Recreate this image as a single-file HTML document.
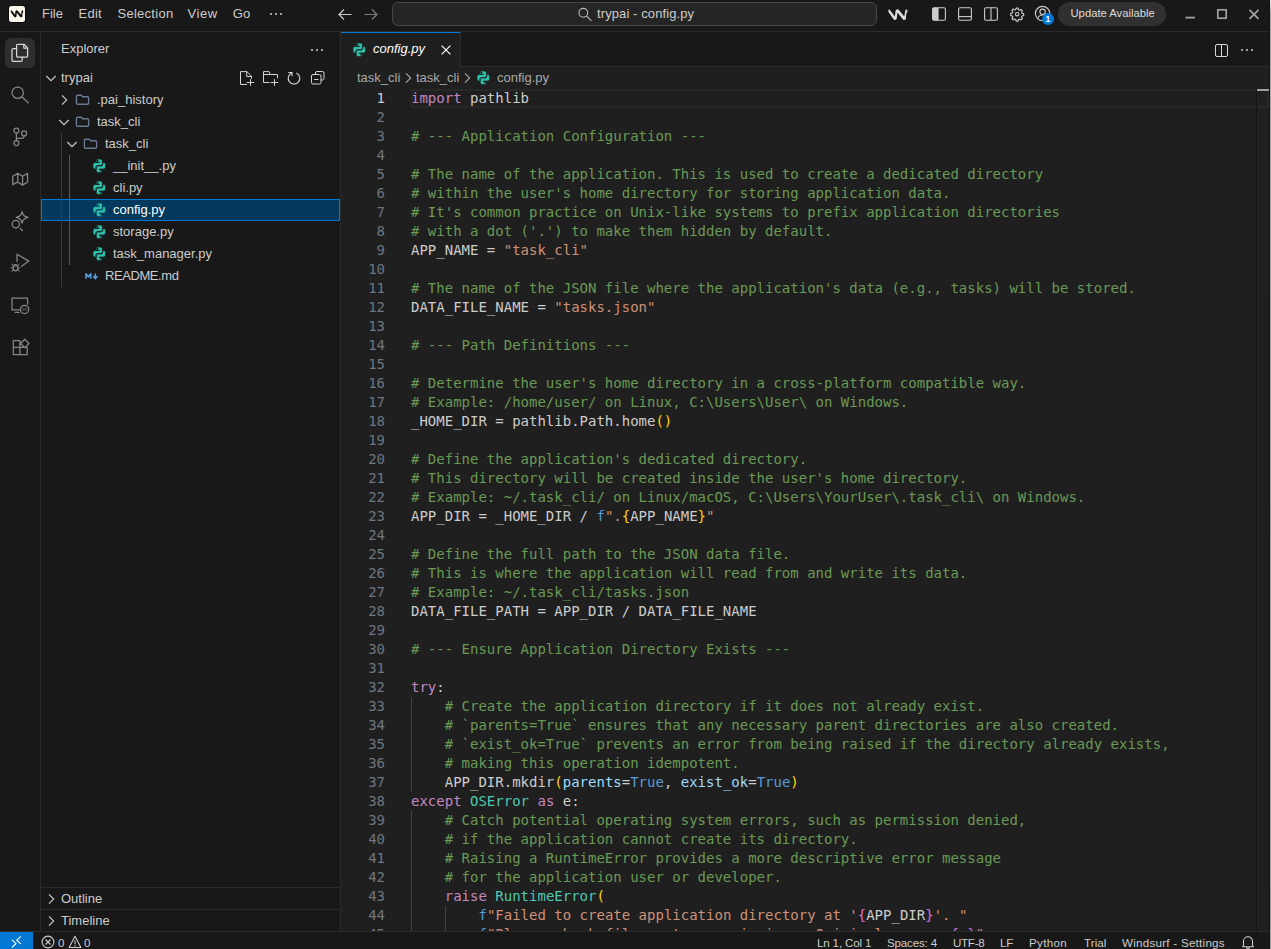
<!DOCTYPE html>
<html lang="en">
<head>
<meta charset="utf-8">
<title>trypai - config.py</title>
<style>
*{box-sizing:border-box;margin:0;padding:0}
html,body{width:1271px;height:949px;overflow:hidden;background:#181818}
body{position:relative;font-family:"Liberation Sans",sans-serif;font-size:13px;color:#cccccc;-webkit-font-smoothing:antialiased}
.abs{position:absolute}
svg{position:absolute;overflow:visible}
.t{position:absolute;white-space:pre;line-height:1}
/* title bar */
#title{left:0;top:0;width:1271px;height:32px;background:#181818;border-bottom:1px solid #2b2b2b}
#logo{left:9px;top:6px;width:16px;height:16px;border-radius:2.5px;background:#fbf4ea;box-shadow:0 0 0 1px rgba(0,0,0,0.450)}
.menu{top:7px;font-size:13px;color:#cccccc}
#search{left:392px;top:2px;width:485px;height:24px;border:1px solid #464646;border-radius:6px;background:#252525}
#update{left:1058px;top:2px;width:108px;height:24px;border-radius:12px;background:#303030}
/* activity bar */
#act{left:0;top:32px;width:41px;height:899px;border-right:1px solid #2b2b2b;background:#181818}
#actsel{left:5px;top:38px;width:30px;height:30px;border-radius:6px;background:#2d2e2e}
/* sidebar */
#side{left:41px;top:32px;width:300px;height:899px;border-right:1px solid #2b2b2b;background:#181818}
.row{position:absolute;left:41px;width:299px;height:22px}
.lbl{position:absolute;top:4px;font-size:13px;line-height:15px;white-space:pre;color:#cccccc}
#selrow{left:41px;top:199px;width:299px;height:22px;background:#04395e;border:1px solid #0078d4}
.guide{position:absolute;width:1px;background:#3a3a3a}
.pane{position:absolute;left:41px;width:299px;height:22px;border-top:1px solid #2b2b2b}
/* editor */
#tabs{left:341px;top:32px;width:930px;height:35px;background:#181818;border-bottom:1px solid #2b2b2b}
#tab{left:341px;top:32px;width:120px;height:35px;background:#1f1f1f;border-top:1px solid #0078d4;border-right:1px solid #2b2b2b}
#ed{left:341px;top:67px;width:930px;height:864px;background:#1f1f1f;overflow:hidden}
#code{position:absolute;left:0;top:22px;width:930px;font-family:"DejaVu Sans Mono","Liberation Mono",monospace;font-size:14px;line-height:19px;color:#cccccc}
.ln{position:relative;height:19px;white-space:pre}
.ln i{position:absolute;left:0;width:44px;text-align:right;font-style:normal;color:#6e7681}
.ln b{position:absolute;left:70px;font-weight:normal}
.c{color:#6a9955}.k{color:#c586c0}.s{color:#ce9178}.v{color:#9cdcfe}.n{color:#569cd6}.y{color:#ffd700}.p{color:#da70d6}.g{color:#4ec9b0}
.bc{font-size:13px;color:#a9a9a9}
/* status */
#status{left:0;top:931px;width:1271px;height:22px;background:#181818;border-top:1px solid #2b2b2b}
#remote{left:0;top:932px;width:33px;height:21px;background:#0078d4}
.st{position:absolute;top:936px;font-size:11.600px;line-height:13px;white-space:pre;color:#cccccc}
</style>
</head>
<body>
<!-- TITLE BAR -->
<div id="title" class="abs"></div>
<div id="logo" class="abs"><svg width="16" height="16" viewBox="0 0 16 16" style="left:0;top:0"><path transform="translate(-0.840 1.120) scale(0.637 0.630)" d="M4.400 5.700 Q5 5.300 5.700 5.800 L10.900 12.500 L11.500 7 Q12.200 5.200 13.400 5.200 Q14.500 5.300 15.300 6.400 L20.300 12.600 L21.300 6.400 Q21.900 5.200 23 5.500 Q23.600 6.600 23.200 8.200 Q22.400 9 22.200 10 L21.900 14.800 Q21.500 16 20.200 16 Q19.200 16 18.600 14.900 L13.500 8.600 L12.700 14.800 Q12.300 16 11 16 Q10 16 9.400 14.900 L4.800 8.400 Q4 7 4.400 5.700 Z" fill="#050505" stroke="#050505" stroke-width="0.500"/></svg></div>
<div class="t menu" style="left:42px">File</div>
<div class="t menu" style="left:78.500px;letter-spacing:0.25px">Edit</div>
<div class="t menu" style="left:117.500px;letter-spacing:0.27px">Selection</div>
<div class="t menu" style="left:187.500px;letter-spacing:0.55px">View</div>
<div class="t menu" style="left:232.800px;letter-spacing:0.1px">Go</div>
<svg width="16" height="16" viewBox="0 0 16 16" style="left:268px;top:6px"><g fill="#cccccc"><circle cx="3" cy="8" r="1"/><circle cx="8" cy="8" r="1"/><circle cx="13" cy="8" r="1"/></g></svg>
<svg width="16" height="16" viewBox="0 0 16 16" style="left:337px;top:6px"><path d="M14.5 8.5H2.5M7 3.5L2 8.5l5 5" fill="none" stroke="#cccccc" stroke-width="1.2"/></svg>
<svg width="16" height="16" viewBox="0 0 16 16" style="left:363px;top:6px"><path d="M1.5 8.5h12M9 3.5l5 5-5 5" fill="none" stroke="#7a7a7a" stroke-width="1.2"/></svg>
<div id="search" class="abs"></div>
<svg width="16" height="16" viewBox="0 0 16 16" style="left:577px;top:6px"><circle cx="6.3" cy="6.8" r="4.4" fill="none" stroke="#b8b8b8" stroke-width="1.1"/><path d="M9.5 10l5 4.8" stroke="#b8b8b8" stroke-width="1.1" fill="none"/></svg>
<div class="t" style="left:597px;top:7px;font-size:13px;letter-spacing:0.1px;color:#cccccc">trypai - config.py</div>
<svg width="28" height="21" viewBox="0 0 28 21" style="left:884px;top:4px"><path d="M4.400 5.700 Q5 5.300 5.700 5.800 L10.900 12.500 L11.500 7 Q12.200 5.200 13.400 5.200 Q14.500 5.300 15.300 6.400 L20.300 12.600 L21.300 6.400 Q21.900 5.200 23 5.500 Q23.600 6.600 23.200 8.200 Q22.400 9 22.200 10 L21.900 14.800 Q21.500 16 20.200 16 Q19.200 16 18.600 14.900 L13.500 8.600 L12.700 14.800 Q12.300 16 11 16 Q10 16 9.400 14.900 L4.800 8.400 Q4 7 4.400 5.700 Z" fill="#dedede"/></svg>
<svg width="16" height="16" viewBox="0 0 16 16" style="left:931px;top:6px"><rect x="1.6" y="1.8" width="12.8" height="12.4" rx="1.4" fill="none" stroke="#cccccc" stroke-width="1.1"/><rect x="1.6" y="1.8" width="6" height="12.4" rx="1" fill="#cccccc"/></svg>
<svg width="16" height="16" viewBox="0 0 16 16" style="left:957px;top:6px"><rect x="1.6" y="1.8" width="12.8" height="12.4" rx="1.4" fill="none" stroke="#cccccc" stroke-width="1.1"/><path d="M1.6 10.6h12.8" stroke="#cccccc" stroke-width="1.1"/></svg>
<svg width="16" height="16" viewBox="0 0 16 16" style="left:983px;top:6px"><rect x="1.6" y="1.8" width="12.8" height="12.4" rx="1.4" fill="none" stroke="#cccccc" stroke-width="1.1"/><path d="M8 1.8v12.4" stroke="#cccccc" stroke-width="1.1"/></svg>
<svg width="14.400" height="14.400" viewBox="0 0 16 16" style="left:1009.800px;top:6.800px"><g fill="none" stroke="#cccccc" stroke-width="1.250"><circle cx="8" cy="8" r="1.9"/><path d="M6.9 1.3h2.2l.4 1.9 1.2.5 1.6-1.1 1.6 1.6-1.1 1.6.5 1.2 1.9.4v2.2l-1.9.4-.5 1.2 1.1 1.6-1.6 1.6-1.6-1.1-1.2.5-.4 1.9H6.9l-.4-1.9-1.2-.5-1.6 1.1-1.6-1.6 1.1-1.6-.5-1.2-1.9-.4V6.900l1.900-.4.5-1.200-1.100-1.600 1.600-1.600 1.600 1.100 1.200-.5z" stroke-linejoin="round"/></g></svg>
<svg width="18" height="18" viewBox="0 0 18 18" style="left:1034px;top:5px"><g fill="none" stroke="#cccccc" stroke-width="1.1"><circle cx="8.6" cy="8.6" r="7.2"/><circle cx="8.6" cy="6.8" r="2.7"/><path d="M3.6 13.6c.9-2.400 2.800-3.600 5-3.600s4.100 1.200 5 3.600"/></g></svg>
<div class="abs" style="left:1042px;top:13px;width:12px;height:12px;border-radius:6px;background:#0078d4"></div>
<div class="t" style="left:1045.600px;top:15px;font-size:8.500px;font-weight:bold;color:#fff">1</div>
<div id="update" class="abs"></div>
<div class="t" style="left:1070.500px;top:8px;font-size:11.250px;color:#dcdcdc">Update Available</div>
<svg width="12" height="12" viewBox="0 0 12 12" style="left:1185px;top:8px"><path d="M.5 9.600h9.500" stroke="#a0a0a0" stroke-width="1.8"/></svg>
<svg width="12" height="12" viewBox="0 0 12 12" style="left:1216px;top:8px"><rect x="1.800" y="1.800" width="8.400" height="8.400" fill="none" stroke="#a0a0a0" stroke-width="1.700"/></svg>
<svg width="12" height="12" viewBox="0 0 12 12" style="left:1248px;top:8px"><path d="M1.500 1.800l9 9M10.500 1.800l-9 9" stroke="#a0a0a0" stroke-width="1.800"/></svg>

<!-- ACTIVITY BAR -->
<div id="act" class="abs"></div>
<div id="actsel" class="abs"></div>
<svg width="40" height="340" viewBox="0 0 40 340" style="left:0;top:32px"><g fill="none" stroke-linejoin="round" stroke-linecap="round" stroke-width="1.25">
<g stroke="#d7d7d7">
<path d="M16.600 16.500h-3.300a1.300 1.300 0 0 0-1.300 1.300v10.300a1.300 1.300 0 0 0 1.300 1.300h7.600a1.300 1.300 0 0 0 1.300-1.300v-2.900"/>
<path d="M17.900 12.300h6.100l3.600 3.600v8a1.300 1.300 0 0 1-1.300 1.300h-8.400a1.300 1.300 0 0 1-1.300-1.300v-10.300a1.300 1.300 0 0 1 1.300-1.300z"/>
<path d="M23.800 12.500v3.600h3.600"/>
</g>
<g stroke="#868686">
<circle cx="17.700" cy="60.700" r="5.700"/><path d="M22 65l6.200 5.800"/>
<circle cx="16.400" cy="98.600" r="2.500"/><circle cx="16.400" cy="111" r="2.500"/><circle cx="24.100" cy="101.400" r="2.500"/>
<path d="M16.400 101.100v7.400M24.100 103.900c0 1.800-1.200 2.400-2.600 2.400h-5.100"/>
<path d="M12.800 144.200l4.900-2.800 4.900 2.800 5-2.800v8.600l-5 3.100-4.900-3.100-4.900 2.600zM17.700 141.400v8.600M22.600 144.200v8.900"/>
<circle cx="15.800" cy="192.100" r="3.700"/><path d="M20.300 196.500l2 2"/>
<path d="M22.100 179.600c.5 3.300 1.900 5 5.900 5.800-4 .8-5.400 2.500-5.900 5.800-.5-3.300-1.900-5-5.900-5.800 4-.8 5.400-2.500 5.900-5.800z"/>
<path d="M17 229.500v-7.300l11.800 6.900-7.500 5.300"/>
<ellipse cx="15.500" cy="235.800" rx="2.400" ry="3.100"/><path d="M13.500 234h4M13.100 235.900h-1.900M17.900 235.900h1.900M13.400 237.700l-1.800 1.500M17.600 237.700l1.800 1.500M13.500 233.600l-1.800-1.500M17.500 233.600l1.800-1.500" stroke-width="1"/>
<path d="M19.300 277.800h-7.300v-11.600h15.600v6M15.200 280.400h4"/>
<circle cx="24.600" cy="277.400" r="4.100"/><path d="M22.900 276.200l1.200 1.200-1.200 1.200M26.300 276.200l-1.200 1.200 1.200 1.200" stroke-width=".8"/>
<path d="M13.300 308.700h6.600v13.800h-6.600zM13.300 315.400h13.900v7.100h-7.300M24.800 307.200l4.200 4.300-4.200 4.300-4.200-4.300z"/>
</g></g></svg>

<!-- SIDEBAR -->
<div id="side" class="abs"></div>
<div class="t" style="left:61px;top:42px;font-size:13px;color:#cccccc">Explorer</div>
<svg width="16" height="16" viewBox="0 0 16 16" style="left:309px;top:42px"><g fill="#cccccc"><circle cx="3" cy="8" r="1"/><circle cx="8" cy="8" r="1"/><circle cx="13" cy="8" r="1"/></g></svg>
<svg width="16" height="16" viewBox="0 0 16 16" style="left:43px;top:70px"><path d="M3.300 6l4.700 4.700 4.700-4.700" fill="none" stroke="#cccccc" stroke-width="1.100"/></svg>
<div class="lbl" style="left:61px;top:70px">trypai</div>
<svg width="16" height="16" viewBox="0 0 16 16" style="left:239px;top:70px"><path d="M8 14.500h-6.500v-12.900h6.400l4.600 4.600v2.600M7.700 1.800v4.700h4.700M11.500 9.200v6.600M7.700 12.500h7.500" fill="none" stroke="#d4d4d4" stroke-width="1"/></svg>
<svg width="16" height="16" viewBox="0 0 16 16" style="left:262px;top:70px"><path d="M7.500 12.500h-6v-10.900h5.500l1.200 2.900h7.300v3.800M1.500 4.500h6.700M12.500 9.200v6.600M8.700 12.500h7.500" fill="none" stroke="#d4d4d4" stroke-width="1"/></svg>
<svg width="16" height="16" viewBox="0 0 16 16" style="left:286px;top:70px"><path d="M5.600 3a5.800 5.800 0 1 0 4.800 0M2.300 2.500h3.700v3.800" fill="none" stroke="#d4d4d4" stroke-width="1.100"/></svg>
<svg width="16" height="16" viewBox="0 0 16 16" style="left:310px;top:70px"><path d="M5.500 4.500v-1.500a1.500 1.500 0 0 1 1.500-1.500h5.500a1.500 1.500 0 0 1 1.500 1.500v5.500a1.500 1.500 0 0 1-1.500 1.500h-1.500" fill="none" stroke="#d4d4d4" stroke-width="1"/><rect x="1.500" y="4.500" width="9.500" height="9.500" rx="1.500" fill="none" stroke="#d4d4d4" stroke-width="1"/><path d="M4 9.500h4.500" stroke="#d4d4d4" stroke-width="1"/></svg>
<div id="selrow" class="abs"></div>
<div class="guide" style="left:61px;top:133px;height:154px"></div>
<div class="guide" style="left:69px;top:155px;height:110px;background:#585858"></div>
<svg width="16" height="16" viewBox="0 0 16 16" style="left:55.600px;top:92px"><path d="M6 3.300l4.700 4.700-4.700 4.700" fill="none" stroke="#cccccc" stroke-width="1.100"/></svg><svg width="14" height="11.700" viewBox="0 0 16 12" preserveAspectRatio="none" style="left:76.0px;top:94.2px"><path d="M1.900 1.200h3.600c.5 0 .9.200 1.200.600l.7 1h5.600c.8 0 1.400.600 1.400 1.400v5c0 .8-.6 1.400-1.400 1.400h-11.100c-.8 0-1.400-.6-1.400-1.400v-6.600c0-.8.600-1.400 1.400-1.400z" fill="none" stroke="#6a7a92" stroke-width="1.550"/></svg>
<div class="lbl" style="left:97px;top:92px">.pai_history</div>
<svg width="16" height="16" viewBox="0 0 16 16" style="left:56px;top:114px"><path d="M3.300 6l4.700 4.700 4.700-4.700" fill="none" stroke="#cccccc" stroke-width="1.100"/></svg><svg width="14" height="11.700" viewBox="0 0 16 12" preserveAspectRatio="none" style="left:76.0px;top:116.2px"><path d="M1.900 1.200h3.600c.5 0 .9.200 1.200.600l.7 1h5.600c.8 0 1.400.600 1.400 1.400v5c0 .8-.6 1.400-1.400 1.400h-11.100c-.8 0-1.400-.6-1.400-1.400v-6.600c0-.8.600-1.400 1.400-1.400z" fill="none" stroke="#6a7a92" stroke-width="1.550"/></svg>
<div class="lbl" style="left:97px;top:114px">task_cli</div>
<svg width="16" height="16" viewBox="0 0 16 16" style="left:64px;top:136px"><path d="M3.300 6l4.700 4.700 4.700-4.700" fill="none" stroke="#cccccc" stroke-width="1.100"/></svg><svg width="14" height="11.700" viewBox="0 0 16 12" preserveAspectRatio="none" style="left:84.0px;top:138.2px"><path d="M1.900 1.200h3.600c.5 0 .9.200 1.200.600l.7 1h5.600c.8 0 1.400.600 1.400 1.400v5c0 .8-.6 1.400-1.400 1.400h-11.100c-.8 0-1.400-.6-1.400-1.400v-6.600c0-.8.600-1.400 1.400-1.400z" fill="none" stroke="#6a7a92" stroke-width="1.550"/></svg>
<div class="lbl" style="left:105px;top:136px">task_cli</div>
<svg width="12.600" height="13.500" viewBox="0 0 24 24" preserveAspectRatio="none" style="left:92.900px;top:159.2px"><path fill="#2ebfa9" stroke="#181818" stroke-width="1.300" d="M14.25.18l.9.2.73.26.59.3.45.32.34.34.25.34.16.33.1.3.04.26.02.2-.01.13V8.5l-.05.63-.13.55-.21.46-.26.38-.3.31-.33.25-.35.19-.35.14-.33.1-.3.07-.26.04-.21.02H8.77l-.69.05-.59.14-.5.22-.41.27-.33.32-.27.35-.2.36-.15.37-.1.35-.07.32-.04.27-.02.21v3.06H3.17l-.21-.03-.28-.07-.32-.12-.35-.18-.36-.26-.36-.36-.35-.46-.32-.59-.28-.73-.21-.88-.14-1.05-.05-1.23.06-1.22.16-1.04.24-.87.32-.71.36-.57.4-.44.42-.33.42-.24.4-.16.36-.1.32-.05.24-.01h.16l.06.01h8.16v-.83H6.18l-.01-2.75-.02-.37.05-.34.11-.31.17-.28.25-.26.31-.23.38-.2.44-.18.51-.15.58-.12.64-.1.71-.06.77-.04.84-.02 1.27.05zm-6.3 1.98l-.23.33-.08.41.08.41.23.34.33.22.41.09.41-.09.33-.22.23-.34.08-.41-.08-.41-.23-.33-.33-.22-.41-.09-.41.09zm13.09 3.95l.28.06.32.12.35.18.36.27.36.35.35.47.32.59.28.73.21.88.14 1.04.05 1.23-.06 1.23-.16 1.04-.24.86-.32.71-.36.57-.4.45-.42.33-.42.24-.4.16-.36.09-.32.05-.24.02-.16-.01h-8.220v.82h5.840l.01 2.760.02.36-.05.34-.11.31-.17.29-.25.25-.31.24-.38.2-.44.17-.51.15-.58.13-.64.09-.71.07-.77.04-.84.01-1.270-.04-1.070-.14-.9-.2-.73-.25-.59-.3-.45-.33-.34-.34-.25-.34-.16-.33-.1-.3-.04-.25-.02-.2.01-.13v-5.340l.05-.64.13-.54.21-.46.26-.38.3-.32.33-.24.35-.2.35-.14.33-.1.3-.06.26-.04.21-.02.13-.01h5.840l.69-.05.59-.14.5-.21.41-.28.33-.32.27-.35.2-.36.15-.36.1-.35.07-.32.04-.28.02-.21V6.070h2.090l.14.01zm-6.470 14.250l-.23.33-.08.41.08.41.23.33.33.23.41.08.41-.08.33-.23.23-.33.08-.41-.08-.41-.23-.33-.33-.23-.41-.08-.41.08z"/></svg>
<div class="lbl" style="left:113px;top:158px">__init__.py</div>
<svg width="12.600" height="13.500" viewBox="0 0 24 24" preserveAspectRatio="none" style="left:92.900px;top:181.2px"><path fill="#2ebfa9" stroke="#181818" stroke-width="1.300" d="M14.25.18l.9.2.73.26.59.3.45.32.34.34.25.34.16.33.1.3.04.26.02.2-.01.13V8.5l-.05.63-.13.55-.21.46-.26.38-.3.31-.33.25-.35.19-.35.14-.33.1-.3.07-.26.04-.21.02H8.77l-.69.05-.59.14-.5.22-.41.27-.33.32-.27.35-.2.36-.15.37-.1.35-.07.32-.04.27-.02.21v3.06H3.17l-.21-.03-.28-.07-.32-.12-.35-.18-.36-.26-.36-.36-.35-.46-.32-.59-.28-.73-.21-.88-.14-1.05-.05-1.23.06-1.22.16-1.04.24-.87.32-.71.36-.57.4-.44.42-.33.42-.24.4-.16.36-.1.32-.05.24-.01h.16l.06.01h8.16v-.83H6.18l-.01-2.75-.02-.37.05-.34.11-.31.17-.28.25-.26.31-.23.38-.2.44-.18.51-.15.58-.12.64-.1.71-.06.77-.04.84-.02 1.27.05zm-6.3 1.98l-.23.33-.08.41.08.41.23.34.33.22.41.09.41-.09.33-.22.23-.34.08-.41-.08-.41-.23-.33-.33-.22-.41-.09-.41.09zm13.09 3.95l.28.06.32.12.35.18.36.27.36.35.35.47.32.59.28.73.21.88.14 1.04.05 1.23-.06 1.23-.16 1.04-.24.86-.32.71-.36.57-.4.45-.42.33-.42.24-.4.16-.36.09-.32.05-.24.02-.16-.01h-8.220v.82h5.840l.01 2.760.02.36-.05.34-.11.31-.17.29-.25.25-.31.24-.38.2-.44.17-.51.15-.58.13-.64.09-.71.07-.77.04-.84.01-1.270-.04-1.070-.14-.9-.2-.73-.25-.59-.3-.45-.33-.34-.34-.25-.34-.16-.33-.1-.3-.04-.25-.02-.2.01-.13v-5.340l.05-.64.13-.54.21-.46.26-.38.3-.32.33-.24.35-.2.35-.14.33-.1.3-.06.26-.04.21-.02.13-.01h5.840l.69-.05.59-.14.5-.21.41-.28.33-.32.27-.35.2-.36.15-.36.1-.35.07-.32.04-.28.02-.21V6.070h2.090l.14.01zm-6.470 14.250l-.23.33-.08.41.08.41.23.33.33.23.41.08.41-.08.33-.23.23-.33.08-.41-.08-.41-.23-.33-.33-.23-.41-.08-.41.08z"/></svg>
<div class="lbl" style="left:113px;top:180px">cli.py</div>
<svg width="12.600" height="13.500" viewBox="0 0 24 24" preserveAspectRatio="none" style="left:92.900px;top:203.2px"><path fill="#2ebfa9" stroke="#04395e" stroke-width="1.300" d="M14.25.18l.9.2.73.26.59.3.45.32.34.34.25.34.16.33.1.3.04.26.02.2-.01.13V8.5l-.05.63-.13.55-.21.46-.26.38-.3.31-.33.25-.35.19-.35.14-.33.1-.3.07-.26.04-.21.02H8.77l-.69.05-.59.14-.5.22-.41.27-.33.32-.27.35-.2.36-.15.37-.1.35-.07.32-.04.27-.02.21v3.06H3.17l-.21-.03-.28-.07-.32-.12-.35-.18-.36-.26-.36-.36-.35-.46-.32-.59-.28-.73-.21-.88-.14-1.05-.05-1.23.06-1.22.16-1.04.24-.87.32-.71.36-.57.4-.44.42-.33.42-.24.4-.16.36-.1.32-.05.24-.01h.16l.06.01h8.16v-.83H6.18l-.01-2.75-.02-.37.05-.34.11-.31.17-.28.25-.26.31-.23.38-.2.44-.18.51-.15.58-.12.64-.1.71-.06.77-.04.84-.02 1.27.05zm-6.3 1.98l-.23.33-.08.41.08.41.23.34.33.22.41.09.41-.09.33-.22.23-.34.08-.41-.08-.41-.23-.33-.33-.22-.41-.09-.41.09zm13.09 3.95l.28.06.32.12.35.18.36.27.36.35.35.47.32.59.28.73.21.88.14 1.04.05 1.23-.06 1.23-.16 1.04-.24.86-.32.71-.36.57-.4.45-.42.33-.42.24-.4.16-.36.09-.32.05-.24.02-.16-.01h-8.220v.82h5.840l.01 2.760.02.36-.05.34-.11.31-.17.29-.25.25-.31.24-.38.2-.44.17-.51.15-.58.13-.64.09-.71.07-.77.04-.84.01-1.270-.04-1.070-.14-.9-.2-.73-.25-.59-.3-.45-.33-.34-.34-.25-.34-.16-.33-.1-.3-.04-.25-.02-.2.01-.13v-5.340l.05-.64.13-.54.21-.46.26-.38.3-.32.33-.24.35-.2.35-.14.33-.1.3-.06.26-.04.21-.02.13-.01h5.840l.69-.05.59-.14.5-.21.41-.28.33-.32.27-.35.2-.36.15-.36.1-.35.07-.32.04-.28.02-.21V6.070h2.090l.14.01zm-6.470 14.250l-.23.33-.08.41.08.41.23.33.33.23.41.08.41-.08.33-.23.23-.33.08-.41-.08-.41-.23-.33-.33-.23-.41-.08-.41.08z"/></svg>
<div class="lbl" style="left:113px;top:202px;color:#ffffff">config.py</div>
<svg width="12.600" height="13.500" viewBox="0 0 24 24" preserveAspectRatio="none" style="left:92.900px;top:225.2px"><path fill="#2ebfa9" stroke="#181818" stroke-width="1.300" d="M14.25.18l.9.2.73.26.59.3.45.32.34.34.25.34.16.33.1.3.04.26.02.2-.01.13V8.5l-.05.63-.13.55-.21.46-.26.38-.3.31-.33.25-.35.19-.35.14-.33.1-.3.07-.26.04-.21.02H8.77l-.69.05-.59.14-.5.22-.41.27-.33.32-.27.35-.2.36-.15.37-.1.35-.07.32-.04.27-.02.21v3.06H3.17l-.21-.03-.28-.07-.32-.12-.35-.18-.36-.26-.36-.36-.35-.46-.32-.59-.28-.73-.21-.88-.14-1.05-.05-1.23.06-1.22.16-1.04.24-.87.32-.71.36-.57.4-.44.42-.33.42-.24.4-.16.36-.1.32-.05.24-.01h.16l.06.01h8.16v-.83H6.18l-.01-2.75-.02-.37.05-.34.11-.31.17-.28.25-.26.31-.23.38-.2.44-.18.51-.15.58-.12.64-.1.71-.06.77-.04.84-.02 1.27.05zm-6.3 1.98l-.23.33-.08.41.08.41.23.34.33.22.41.09.41-.09.33-.22.23-.34.08-.41-.08-.41-.23-.33-.33-.22-.41-.09-.41.09zm13.09 3.95l.28.06.32.12.35.18.36.27.36.35.35.47.32.59.28.73.21.88.14 1.04.05 1.23-.06 1.23-.16 1.04-.24.86-.32.71-.36.57-.4.45-.42.33-.42.24-.4.16-.36.09-.32.05-.24.02-.16-.01h-8.220v.82h5.840l.01 2.760.02.36-.05.34-.11.31-.17.29-.25.25-.31.24-.38.2-.44.17-.51.15-.58.13-.64.09-.71.07-.77.04-.84.01-1.270-.04-1.070-.14-.9-.2-.73-.25-.59-.3-.45-.33-.34-.34-.25-.34-.16-.33-.1-.3-.04-.25-.02-.2.01-.13v-5.340l.05-.64.13-.54.21-.46.26-.38.3-.32.33-.24.35-.2.35-.14.33-.1.3-.06.26-.04.21-.02.13-.01h5.840l.69-.05.59-.14.5-.21.41-.28.33-.32.27-.35.2-.36.15-.36.1-.35.07-.32.04-.28.02-.21V6.070h2.090l.14.01zm-6.470 14.250l-.23.33-.08.41.08.41.23.33.33.23.41.08.41-.08.33-.23.23-.33.08-.41-.08-.41-.23-.33-.33-.23-.41-.08-.41.08z"/></svg>
<div class="lbl" style="left:113px;top:224px">storage.py</div>
<svg width="12.600" height="13.500" viewBox="0 0 24 24" preserveAspectRatio="none" style="left:92.900px;top:247.2px"><path fill="#2ebfa9" stroke="#181818" stroke-width="1.300" d="M14.25.18l.9.2.73.26.59.3.45.32.34.34.25.34.16.33.1.3.04.26.02.2-.01.13V8.5l-.05.63-.13.55-.21.46-.26.38-.3.31-.33.25-.35.19-.35.14-.33.1-.3.07-.26.04-.21.02H8.77l-.69.05-.59.14-.5.22-.41.27-.33.32-.27.35-.2.36-.15.37-.1.35-.07.32-.04.27-.02.21v3.06H3.17l-.21-.03-.28-.07-.32-.12-.35-.18-.36-.26-.36-.36-.35-.46-.32-.59-.28-.73-.21-.88-.14-1.05-.05-1.23.06-1.22.16-1.04.24-.87.32-.71.36-.57.4-.44.42-.33.42-.24.4-.16.36-.1.32-.05.24-.01h.16l.06.01h8.16v-.83H6.18l-.01-2.75-.02-.37.05-.34.11-.31.17-.28.25-.26.31-.23.38-.2.44-.18.51-.15.58-.12.64-.1.71-.06.77-.04.84-.02 1.27.05zm-6.3 1.98l-.23.33-.08.41.08.41.23.34.33.22.41.09.41-.09.33-.22.23-.34.08-.41-.08-.41-.23-.33-.33-.22-.41-.09-.41.09zm13.09 3.95l.28.06.32.12.35.18.36.27.36.35.35.47.32.59.28.73.21.88.14 1.04.05 1.23-.06 1.23-.16 1.04-.24.86-.32.71-.36.57-.4.45-.42.33-.42.24-.4.16-.36.09-.32.05-.24.02-.16-.01h-8.220v.82h5.840l.01 2.760.02.36-.05.34-.11.31-.17.29-.25.25-.31.24-.38.2-.44.17-.51.15-.58.13-.64.09-.71.07-.77.04-.84.01-1.270-.04-1.070-.14-.9-.2-.73-.25-.59-.3-.45-.33-.34-.34-.25-.34-.16-.33-.1-.3-.04-.25-.02-.2.01-.13v-5.340l.05-.64.13-.54.21-.46.26-.38.3-.32.33-.24.35-.2.35-.14.33-.1.3-.06.26-.04.21-.02.13-.01h5.840l.69-.05.59-.14.5-.21.41-.28.33-.32.27-.35.2-.36.15-.36.1-.35.07-.32.04-.28.02-.21V6.070h2.090l.14.01zm-6.470 14.250l-.23.33-.08.41.08.41.23.33.33.23.41.08.41-.08.33-.23.23-.33.08-.41-.08-.41-.23-.33-.33-.23-.41-.08-.41.08z"/></svg>
<div class="lbl" style="left:113px;top:246px">task_manager.py</div>
<svg width="14" height="8" viewBox="0 0 14 8" style="left:84.500px;top:272px"><path d="M1 6.800v-5l2.400 3 2.400-3v5" fill="none" stroke="#58a0e8" stroke-width="1.500" stroke-linejoin="round"/><path d="M10.300 1.400v4.600M8.200 4.200l2.100 2.400 2.100-2.400" fill="none" stroke="#58a0e8" stroke-width="1.500"/></svg>
<div class="lbl" style="left:105px;top:268px;letter-spacing:-0.42px">README.md</div>
<div class="pane" style="top:887px"></div>
<div class="pane" style="top:909px"></div>
<svg width="16" height="16" viewBox="0 0 16 16" style="left:43px;top:891px"><path d="M6 3.300l4.700 4.700-4.700 4.700" fill="none" stroke="#cccccc" stroke-width="1.100"/></svg>
<div class="lbl" style="left:61px;top:891px">Outline</div>
<svg width="16" height="16" viewBox="0 0 16 16" style="left:43px;top:913px"><path d="M6 3.300l4.700 4.700-4.700 4.700" fill="none" stroke="#cccccc" stroke-width="1.100"/></svg>
<div class="lbl" style="left:61px;top:913px">Timeline</div>

<!-- EDITOR -->
<div id="tabs" class="abs"></div>
<div id="tab" class="abs"></div>
<svg width="12.600" height="13.500" viewBox="0 0 24 24" preserveAspectRatio="none" style="left:352.6px;top:43.2px"><path fill="#2ebfa9" stroke="#1f1f1f" stroke-width="1.300" d="M14.25.18l.9.2.73.26.59.3.45.32.34.34.25.34.16.33.1.3.04.26.02.2-.01.13V8.5l-.05.63-.13.55-.21.46-.26.38-.3.31-.33.25-.35.19-.35.14-.33.1-.3.07-.26.04-.21.02H8.77l-.69.05-.59.14-.5.22-.41.27-.33.32-.27.35-.2.36-.15.37-.1.35-.07.32-.04.27-.02.21v3.06H3.17l-.21-.03-.28-.07-.32-.12-.35-.18-.36-.26-.36-.36-.35-.46-.32-.59-.28-.73-.21-.88-.14-1.05-.05-1.23.06-1.22.16-1.04.24-.87.32-.71.36-.57.4-.44.42-.33.42-.24.4-.16.36-.1.32-.05.24-.01h.16l.06.01h8.16v-.83H6.18l-.01-2.75-.02-.37.05-.34.11-.31.17-.28.25-.26.31-.23.38-.2.44-.18.51-.15.58-.12.64-.1.71-.06.77-.04.84-.02 1.27.05zm-6.3 1.98l-.23.33-.08.41.08.41.23.34.33.22.41.09.41-.09.33-.22.23-.34.08-.41-.08-.41-.23-.33-.33-.22-.41-.09-.41.09zm13.09 3.95l.28.06.32.12.35.18.36.27.36.35.35.47.32.59.28.73.21.88.14 1.04.05 1.23-.06 1.23-.16 1.04-.24.86-.32.71-.36.57-.4.45-.42.33-.42.24-.4.16-.36.09-.32.05-.24.02-.16-.01h-8.220v.82h5.840l.01 2.760.02.36-.05.34-.11.31-.17.29-.25.25-.31.24-.38.2-.44.17-.51.15-.58.13-.64.09-.71.07-.77.04-.84.01-1.270-.04-1.070-.14-.9-.2-.73-.25-.59-.3-.45-.33-.34-.34-.25-.34-.16-.33-.1-.3-.04-.25-.02-.2.01-.13v-5.340l.05-.64.13-.54.21-.46.26-.38.3-.32.33-.24.35-.2.35-.14.33-.1.3-.06.26-.04.21-.02.13-.01h5.840l.69-.05.59-.14.5-.21.41-.28.33-.32.27-.35.2-.36.15-.36.1-.35.07-.32.04-.28.02-.21V6.070h2.090l.14.01zm-6.470 14.250l-.23.33-.08.41.08.41.23.33.33.23.41.08.41-.08.33-.23.23-.33.08-.41-.08-.41-.23-.33-.33-.23-.41-.08-.41.08z"/></svg>
<div class="t" style="left:373px;top:42px;font-size:13px;font-style:italic;color:#ffffff">config.py</div>
<svg width="16" height="16" viewBox="0 0 16 16" style="left:438px;top:42px"><path d="M3.600 3.600l8.800 8.800M12.400 3.600l-8.800 8.800" stroke="#ffffff" stroke-width="1.200" fill="none"/></svg>
<svg width="16" height="16" viewBox="0 0 16 16" style="left:1214px;top:43px"><rect x="1.500" y="1.500" width="12" height="12" rx="1.500" fill="none" stroke="#d8d8d8" stroke-width="1"/><path d="M7.500 1.500v12" stroke="#d8d8d8" stroke-width="1"/></svg>
<svg width="16" height="16" viewBox="0 0 16 16" style="left:1239px;top:42px"><g fill="#cccccc"><circle cx="3" cy="8" r="1"/><circle cx="8" cy="8" r="1"/><circle cx="13" cy="8" r="1"/></g></svg>
<div id="ed" class="abs"><div id="code">
<div class="ln"><i style="color:#cccccc">1</i><b><span class="k">import</span> pathlib</b></div>
<div class="ln"><i>2</i><b></b></div>
<div class="ln"><i>3</i><b><span class="c"># --- Application Configuration ---</span></b></div>
<div class="ln"><i>4</i><b></b></div>
<div class="ln"><i>5</i><b><span class="c"># The name of the application. This is used to create a dedicated directory</span></b></div>
<div class="ln"><i>6</i><b><span class="c"># within the user's home directory for storing application data.</span></b></div>
<div class="ln"><i>7</i><b><span class="c"># It's common practice on Unix-like systems to prefix application directories</span></b></div>
<div class="ln"><i>8</i><b><span class="c"># with a dot ('.') to make them hidden by default.</span></b></div>
<div class="ln"><i>9</i><b>APP_NAME = <span class="s">"task_cli"</span></b></div>
<div class="ln"><i>10</i><b></b></div>
<div class="ln"><i>11</i><b><span class="c"># The name of the JSON file where the application's data (e.g., tasks) will be stored.</span></b></div>
<div class="ln"><i>12</i><b>DATA_FILE_NAME = <span class="s">"tasks.json"</span></b></div>
<div class="ln"><i>13</i><b></b></div>
<div class="ln"><i>14</i><b><span class="c"># --- Path Definitions ---</span></b></div>
<div class="ln"><i>15</i><b></b></div>
<div class="ln"><i>16</i><b><span class="c"># Determine the user's home directory in a cross-platform compatible way.</span></b></div>
<div class="ln"><i>17</i><b><span class="c"># Example: /home/user/ on Linux, C:\Users\User\ on Windows.</span></b></div>
<div class="ln"><i>18</i><b>_HOME_DIR = pathlib.Path.home<span class="y">()</span></b></div>
<div class="ln"><i>19</i><b></b></div>
<div class="ln"><i>20</i><b><span class="c"># Define the application's dedicated directory.</span></b></div>
<div class="ln"><i>21</i><b><span class="c"># This directory will be created inside the user's home directory.</span></b></div>
<div class="ln"><i>22</i><b><span class="c"># Example: ~/.task_cli/ on Linux/macOS, C:\Users\YourUser\.task_cli\ on Windows.</span></b></div>
<div class="ln"><i>23</i><b>APP_DIR = _HOME_DIR / <span class="n">f</span><span class="s">".</span><span class="y">{</span>APP_NAME<span class="y">}</span><span class="s">"</span></b></div>
<div class="ln"><i>24</i><b></b></div>
<div class="ln"><i>25</i><b><span class="c"># Define the full path to the JSON data file.</span></b></div>
<div class="ln"><i>26</i><b><span class="c"># This is where the application will read from and write its data.</span></b></div>
<div class="ln"><i>27</i><b><span class="c"># Example: ~/.task_cli/tasks.json</span></b></div>
<div class="ln"><i>28</i><b>DATA_FILE_PATH = APP_DIR / DATA_FILE_NAME</b></div>
<div class="ln"><i>29</i><b></b></div>
<div class="ln"><i>30</i><b><span class="c"># --- Ensure Application Directory Exists ---</span></b></div>
<div class="ln"><i>31</i><b></b></div>
<div class="ln"><i>32</i><b><span class="k">try</span>:</b></div>
<div class="ln"><i>33</i><b>    <span class="c"># Create the application directory if it does not already exist.</span></b></div>
<div class="ln"><i>34</i><b>    <span class="c"># `parents=True` ensures that any necessary parent directories are also created.</span></b></div>
<div class="ln"><i>35</i><b>    <span class="c"># `exist_ok=True` prevents an error from being raised if the directory already exists,</span></b></div>
<div class="ln"><i>36</i><b>    <span class="c"># making this operation idempotent.</span></b></div>
<div class="ln"><i>37</i><b>    APP_DIR.mkdir<span class="y">(</span><span class="v">parents</span>=<span class="n">True</span>, <span class="v">exist_ok</span>=<span class="n">True</span><span class="y">)</span></b></div>
<div class="ln"><i>38</i><b><span class="k">except</span> <span class="g">OSError</span> <span class="k">as</span> e:</b></div>
<div class="ln"><i>39</i><b>    <span class="c"># Catch potential operating system errors, such as permission denied,</span></b></div>
<div class="ln"><i>40</i><b>    <span class="c"># if the application cannot create its directory.</span></b></div>
<div class="ln"><i>41</i><b>    <span class="c"># Raising a RuntimeError provides a more descriptive error message</span></b></div>
<div class="ln"><i>42</i><b>    <span class="c"># for the application user or developer.</span></b></div>
<div class="ln"><i>43</i><b>    <span class="k">raise</span> <span class="g">RuntimeError</span><span class="y">(</span></b></div>
<div class="ln"><i>44</i><b>        <span class="n">f</span><span class="s">"Failed to create application directory at '</span><span class="p">{</span>APP_DIR<span class="p">}</span><span class="s">'. "</span></b></div>
<div class="ln"><i>45</i><b>        <span class="n">f</span><span class="s">"Please check file system permissions. Original error: </span><span class="p">{</span>e<span class="p">}</span><span class="s">"</span></b></div>
</div></div>
<div class="t bc" style="left:357px;top:71px">task_cli</div>
<svg width="16" height="16" viewBox="0 0 16 16" style="left:400px;top:70px"><path d="M6 3.300l4.700 4.700-4.700 4.700" fill="none" stroke="#a9a9a9" stroke-width="1.100"/></svg>
<div class="t bc" style="left:416px;top:71px">task_cli</div>
<svg width="16" height="16" viewBox="0 0 16 16" style="left:459px;top:70px"><path d="M6 3.300l4.700 4.700-4.700 4.700" fill="none" stroke="#a9a9a9" stroke-width="1.100"/></svg>
<svg width="12.600" height="13.500" viewBox="0 0 24 24" preserveAspectRatio="none" style="left:476.600px;top:70.900px"><path fill="#2ebfa9" stroke="#1f1f1f" stroke-width="1.300" d="M14.25.18l.9.2.73.26.59.3.45.32.34.34.25.34.16.33.1.3.04.26.02.2-.01.13V8.5l-.05.63-.13.55-.21.46-.26.38-.3.31-.33.25-.35.19-.35.14-.33.1-.3.07-.26.04-.21.02H8.77l-.69.05-.59.14-.5.22-.41.27-.33.32-.27.35-.2.36-.15.37-.1.35-.07.32-.04.27-.02.21v3.06H3.17l-.21-.03-.28-.07-.32-.12-.35-.18-.36-.26-.36-.36-.35-.46-.32-.59-.28-.73-.21-.88-.14-1.05-.05-1.23.06-1.22.16-1.04.24-.87.32-.71.36-.57.4-.44.42-.33.42-.24.4-.16.36-.1.32-.05.24-.01h.16l.06.01h8.16v-.83H6.18l-.01-2.75-.02-.37.05-.34.11-.31.17-.28.25-.26.31-.23.38-.2.44-.18.51-.15.58-.12.64-.1.71-.06.77-.04.84-.02 1.27.05zm-6.3 1.98l-.23.33-.08.41.08.41.23.34.33.22.41.09.41-.09.33-.22.23-.34.08-.41-.08-.41-.23-.33-.33-.22-.41-.09-.41.09zm13.09 3.95l.28.06.32.12.35.18.36.27.36.35.35.47.32.59.28.73.21.88.14 1.04.05 1.23-.06 1.23-.16 1.04-.24.86-.32.71-.36.57-.4.45-.42.33-.42.24-.4.16-.36.09-.32.05-.24.02-.16-.01h-8.220v.82h5.840l.01 2.760.02.36-.05.34-.11.31-.17.29-.25.25-.31.24-.38.2-.44.17-.51.15-.58.13-.64.09-.71.07-.77.04-.84.01-1.270-.04-1.070-.14-.9-.2-.73-.25-.59-.3-.45-.33-.34-.34-.25-.34-.16-.33-.1-.3-.04-.25-.02-.2.01-.13v-5.340l.05-.64.13-.54.21-.46.26-.38.3-.32.33-.24.35-.2.35-.14.33-.1.3-.06.26-.04.21-.02.13-.01h5.840l.69-.05.59-.14.5-.21.41-.28.33-.32.27-.35.2-.36.15-.36.1-.35.07-.32.04-.28.02-.21V6.070h2.090l.14.01zm-6.470 14.250l-.23.33-.08.41.08.41.23.33.33.23.41.08.41-.08.33-.23.23-.33.08-.41-.08-.41-.23-.33-.33-.23-.41-.08-.41.08z"/></svg>
<div class="t bc" style="left:497px;top:71px">config.py</div>
<div class="abs" style="left:411px;top:89px;width:858px;height:19px;border:2px solid #282828"></div>
<div class="abs" style="left:1256px;top:89px;width:1px;height:842px;background:#141414"></div>
<div class="abs" style="left:1257px;top:89px;width:13px;height:2px;background:#a0a0a0"></div>

<div class="abs" style="left:411px;top:697px;width:1px;height:95px;background:#424242"></div>
<div class="abs" style="left:411px;top:811px;width:1px;height:120px;background:#424242"></div>
<div class="abs" style="left:445px;top:906px;width:1px;height:25px;background:#424242"></div>

<!-- STATUS BAR -->
<div id="status" class="abs"></div>
<div id="remote" class="abs"></div>
<svg width="16" height="16" viewBox="0 0 16 16" style="left:9px;top:934px"><path d="M3 5.900l4 3.750-4 3.750M11.800 2.400l-4 3.750 4 3.750" fill="none" stroke="#ffffff" stroke-width="1.200"/></svg>
<svg width="14" height="14" viewBox="0 0 14 14" style="left:41px;top:935px"><circle cx="7" cy="7" r="5.900" fill="none" stroke="#cccccc" stroke-width="1.100"/><path d="M4.500 4.500l5 5M9.500 4.500l-5 5" stroke="#cccccc" stroke-width="1.100"/></svg>
<div class="st" style="left:58px">0</div>
<svg width="14" height="14" viewBox="0 0 14 14" style="left:68px;top:935px"><path d="M7 1.300l5.900 11.200h-11.800z" fill="none" stroke="#cccccc" stroke-width="1.100" stroke-linejoin="round"/><path d="M7 5.200v4M7 10.200v1.200" stroke="#cccccc" stroke-width="1.100"/></svg>
<div class="st" style="left:84px">0</div>
<div class="st" style="left:817px;letter-spacing:-0.17px">Ln 1, Col 1</div>
<div class="st" style="left:887px;letter-spacing:-0.18px">Spaces: 4</div>
<div class="st" style="left:953px;letter-spacing:-0.3px">UTF-8</div>
<div class="st" style="left:1000px;letter-spacing:-0.3px">LF</div>
<div class="st" style="left:1029px;letter-spacing:0.33px">Python</div>
<div class="st" style="left:1084px;letter-spacing:0.06px">Trial</div>
<div class="st" style="left:1122px;letter-spacing:0.26px">Windsurf - Settings</div>
<svg width="16" height="16" viewBox="0 0 16 16" style="left:1240px;top:934px"><path d="M3.500 11.500v-4.300a4.500 4.500 0 0 1 9 0v4.300l1 1.300h-11zM6.600 13.200a1.400 1.400 0 0 0 2.800 0" fill="none" stroke="#cccccc" stroke-width="1.100" stroke-linejoin="round"/></svg>

<div class="abs" style="left:1269px;top:0;width:1px;height:949px;background:#121212"></div>
<div class="abs" style="left:1270px;top:0;width:1px;height:949px;background:linear-gradient(#e6e6e6 0,#a8a8a8 14px,#a4a4a4 100%)"></div>
</body>
</html>
